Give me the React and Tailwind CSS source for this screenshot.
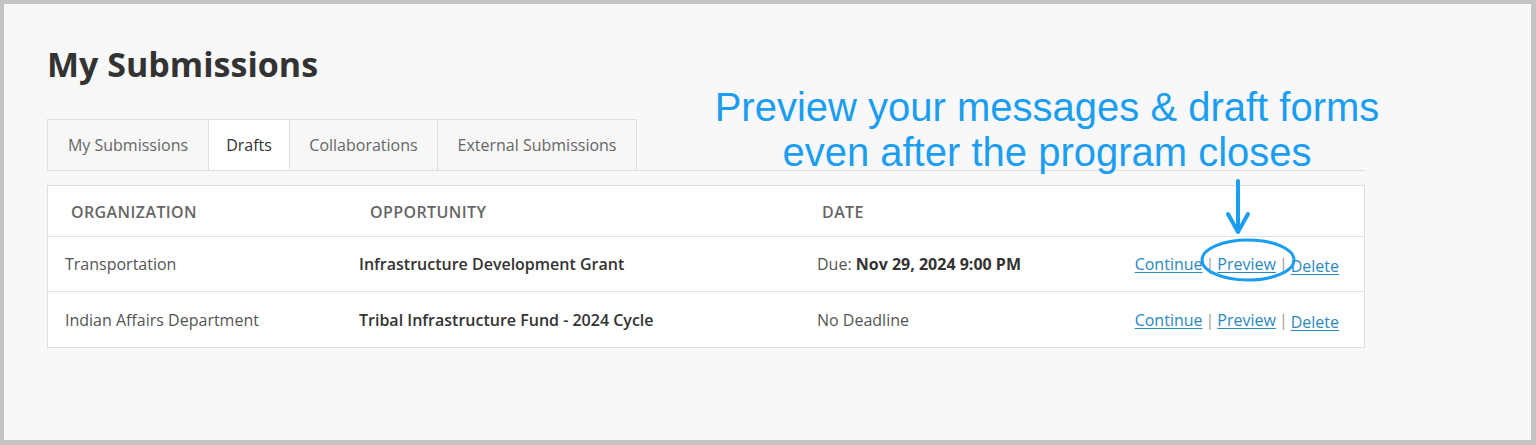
import React from "react";

const tabs = [
  { label: "My Submissions", w: "w-[161px]" },
  { label: "Drafts", w: "w-[81px]", active: true },
  { label: "Collaborations", w: "w-[148px]" },
  { label: "External Submissions", w: "w-[200px]" },
];

const rows = [
  {
    org: "Transportation",
    opp: "Infrastructure Development Grant",
    date: (
      <>
        Due: <span className="font-bold text-[#333]">Nov 29, 2024 9:00 PM</span>
      </>
    ),
  },
  {
    org: "Indian Affairs Department",
    opp: "Tribal Infrastructure Fund - 2024 Cycle",
    date: "No Deadline",
  },
];

function Actions() {
  return (
    <div className="flex items-center text-[16px] text-[#2b88c0]">
      <a href="#" className="underline underline-offset-2">Continue</a>
      <span className="mx-[3px] text-[#999]">|</span>
      <a href="#" className="underline underline-offset-2">Preview</a>
      <span className="mx-[3px] text-[#999]">|</span>
      <a href="#" className="underline underline-offset-2 translate-y-[2px]">Delete</a>
    </div>
  );
}

export default function App() {
  return (
    <div className="relative h-[445px] w-full bg-[#c4c4c4] pt-[4px] pl-[4px] pr-[5px] pb-[5px]" style={{ fontFamily: "'Open Sans', Lato, sans-serif" }}>
      <div className="h-full bg-[#f8f8f8] pl-[43px] pt-[40px]">
        <h1 className="text-[34px] leading-[40px] font-bold text-[#333]">My Submissions</h1>

        {/* Tabs */}
        <div className="mt-[35px] flex w-[1318px] border-b border-[#dedede]">
          {tabs.map((t, i) => (
            <div
              key={t.label}
              className={`${t.w} flex h-[51px] items-center justify-center border-t border-l border-[#dedede] text-[16px] ${i === tabs.length - 1 ? "border-r" : ""} ${t.active ? "bg-white text-[#333]" : "bg-[#f7f7f7] text-[#666]"}`}
            >
              {t.label}
            </div>
          ))}
        </div>

        {/* Table */}
        <div className="mt-[14px] w-[1318px] border border-[#dedede] bg-white text-[16px] text-[#555]">
          <div className="flex h-[51px] items-center border-b border-[#e3e3e3] pt-[1px] text-[16px] font-semibold uppercase tracking-[0.4px] text-[#666]">
            <div className="w-[294px] pl-[23px]">Organization</div>
            <div className="w-[458px] pl-[28px]">Opportunity</div>
            <div className="w-[317px] pl-[22px]">Date</div>
            <div className="flex-1" />
          </div>
          {rows.map((r, i) => (
            <div key={r.org} className={`flex h-[55px] items-center ${i === 0 ? "border-b border-[#e3e3e3]" : ""}`}>
              <div className="w-[294px] pl-[17px]">{r.org}</div>
              <div className="w-[458px] pl-[17px] font-semibold text-[#333]">{r.opp}</div>
              <div className="w-[317px] pl-[17px]">{r.date}</div>
              <div className="flex flex-1 justify-end pr-[25px]">
                <Actions />
              </div>
            </div>
          ))}
        </div>
      </div>

      {/* Annotation callout */}
      <div
        className="absolute left-[697px] top-[85px] w-[700px] text-center text-[40px] leading-[45px] text-[#1b9df0]"
        style={{ fontFamily: "'Liberation Sans', Arial, sans-serif" }}
      >
        Preview your messages &amp; draft forms
        <br />
        even after the program closes
      </div>
      <svg className="absolute left-[1190px] top-[175px]" width="120" height="115" viewBox="0 0 120 115" fill="none">
        <path d="M48 6 V56" stroke="#1b9df0" strokeWidth="4" strokeLinecap="round" />
        <path d="M38 39 L48 57 L58 39" stroke="#1b9df0" strokeWidth="4" strokeLinecap="round" strokeLinejoin="round" />
        <ellipse cx="58" cy="85" rx="46" ry="20" stroke="#1b9df0" strokeWidth="3" />
      </svg>
    </div>
  );
}
